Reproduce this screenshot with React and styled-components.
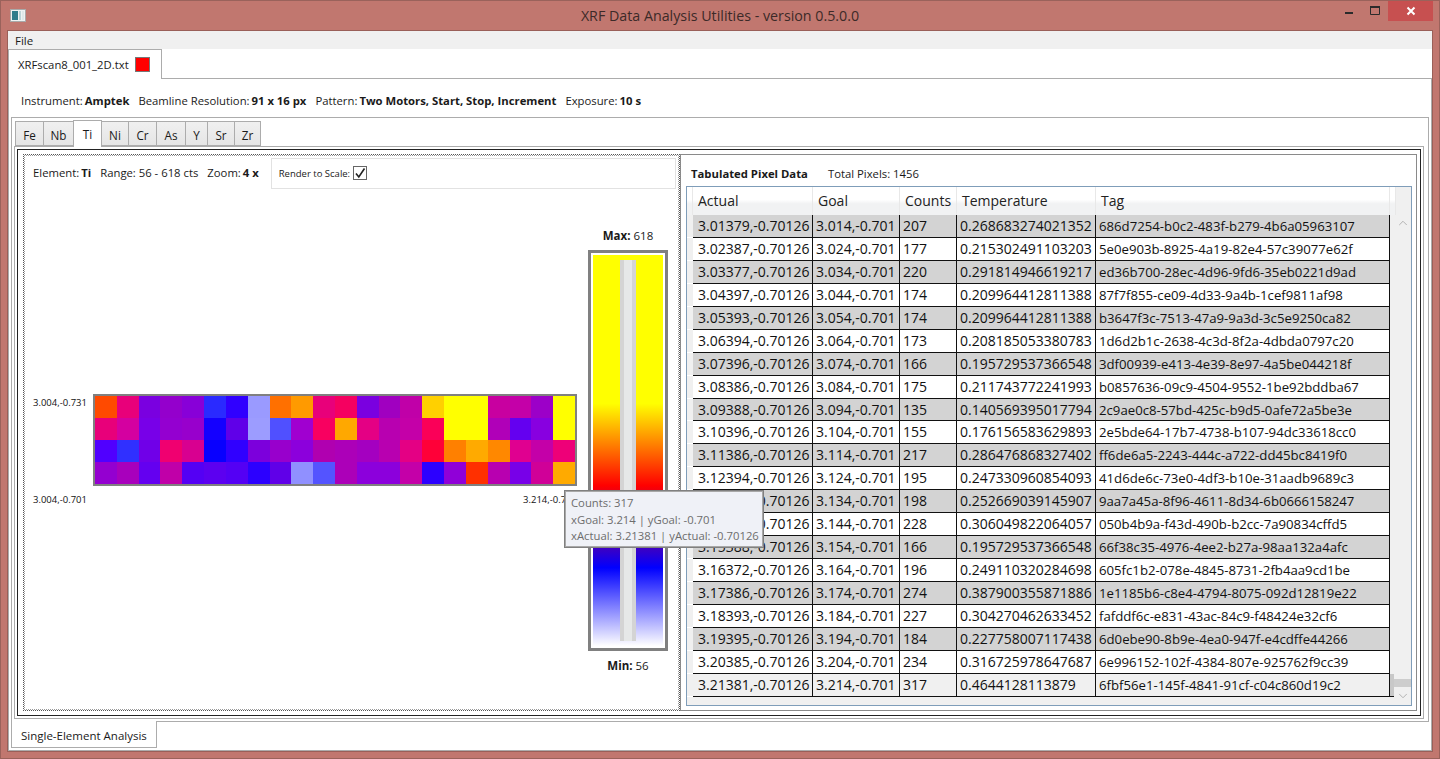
import React from 'react'
import styled, { createGlobalStyle } from 'styled-components'
import { ChevronUp, ChevronDown } from 'lucide-react'

const GlobalStyle = createGlobalStyle`
    html, body {
        margin: 0;
        padding: 0;
        overflow: hidden;
    }
    body {
        font-family: "Open Sans", "Noto Sans", sans-serif;
        font-size: 11.3px;
        color: #1a1a1a;
    }
    * {
        box-sizing: border-box;
    }
`

const Y = '#ffff00'

// heat map cells, read off the picture row by row
const heat = [
    ['#ff4a00', '#e8007a', '#7a00e0', '#9400cc', '#8800d8', '#2a2aff', '#3000ff', '#9a9aff', '#ff7000', '#ff9a00', '#e8007a', '#f50060', '#7a00e0', '#a000c0', '#c000a8', '#ffd000', Y, Y, '#c800a0', '#c400a8', '#9c00c8', Y],
    ['#e8007a', '#d400a0', '#7800e8', '#9400d0', '#9800cc', '#1400ff', '#6000e8', '#9c9cff', '#5050ff', '#a000d0', '#f80060', '#ffa800', '#e40084', '#b800b0', '#c400a8', '#fa0058', Y, Y, '#b000b8', '#6400f0', '#8800e0', Y],
    ['#5000ff', '#3030ff', '#7000e8', '#f00070', '#d80090', '#0800ff', '#3000ff', '#7c00dc', '#9800cc', '#8c00dc', '#b000b0', '#ac00b8', '#a400c0', '#b800b0', '#e40084', '#ff0038', '#ff8000', '#ffaa00', '#ff8800', '#e00090', '#c400a8', '#ee0078'],
    ['#9400d0', '#a800bc', '#6400f0', '#c000a8', '#5400f4', '#5c00f0', '#5400f4', '#2c00ff', '#6000e8', '#9090ff', '#5454ff', '#ac00b8', '#8c00dc', '#8c00dc', '#c400a8', '#2c00ff', '#9000d8', '#ff3000', '#b800b0', '#7800e8', '#d00098', '#ffaa00'],
]

const rows = [
    ['3.01379,-0.70126', '3.014,-0.701', '207', '0.268683274021352', '686d7254-b0c2-483f-b279-4b6a05963107'],
    ['3.02387,-0.70126', '3.024,-0.701', '177', '0.215302491103203', '5e0e903b-8925-4a19-82e4-57c39077e62f'],
    ['3.03377,-0.70126', '3.034,-0.701', '220', '0.291814946619217', 'ed36b700-28ec-4d96-9fd6-35eb0221d9ad'],
    ['3.04397,-0.70126', '3.044,-0.701', '174', '0.209964412811388', '87f7f855-ce09-4d33-9a4b-1cef9811af98'],
    ['3.05393,-0.70126', '3.054,-0.701', '174', '0.209964412811388', 'b3647f3c-7513-47a9-9a3d-3c5e9250ca82'],
    ['3.06394,-0.70126', '3.064,-0.701', '173', '0.208185053380783', '1d6d2b1c-2638-4c3d-8f2a-4dbda0797c20'],
    ['3.07396,-0.70126', '3.074,-0.701', '166', '0.195729537366548', '3df00939-e413-4e39-8e97-4a5be044218f'],
    ['3.08386,-0.70126', '3.084,-0.701', '175', '0.211743772241993', 'b0857636-09c9-4504-9552-1be92bddba67'],
    ['3.09388,-0.70126', '3.094,-0.701', '135', '0.140569395017794', '2c9ae0c8-57bd-425c-b9d5-0afe72a5be3e'],
    ['3.10396,-0.70126', '3.104,-0.701', '155', '0.176156583629893', '2e5bde64-17b7-4738-b107-94dc33618cc0'],
    ['3.11386,-0.70126', '3.114,-0.701', '217', '0.286476868327402', 'ff6de6a5-2243-444c-a722-dd45bc8419f0'],
    ['3.12394,-0.70126', '3.124,-0.701', '195', '0.247330960854093', '41d6de6c-73e0-4df3-b10e-31aadb9689c3'],
    ['3.13389,-0.70126', '3.134,-0.701', '198', '0.252669039145907', '9aa7a45a-8f96-4611-8d34-6b0666158247'],
    ['3.14391,-0.70126', '3.144,-0.701', '228', '0.306049822064057', '050b4b9a-f43d-490b-b2cc-7a90834cffd5'],
    ['3.15388,-0.70126', '3.154,-0.701', '166', '0.195729537366548', '66f38c35-4976-4ee2-b27a-98aa132a4afc'],
    ['3.16372,-0.70126', '3.164,-0.701', '196', '0.249110320284698', '605fc1b2-078e-4845-8731-2fb4aa9cd1be'],
    ['3.17386,-0.70126', '3.174,-0.701', '274', '0.387900355871886', '1e1185b6-c8e4-4794-8075-092d12819e22'],
    ['3.18393,-0.70126', '3.184,-0.701', '227', '0.304270462633452', 'fafddf6c-e831-43ac-84c9-f48424e32cf6'],
    ['3.19395,-0.70126', '3.194,-0.701', '184', '0.227758007117438', '6d0ebe90-8b9e-4ea0-947f-e4cdffe44266'],
    ['3.20385,-0.70126', '3.204,-0.701', '234', '0.316725978647687', '6e996152-102f-4384-807e-925762f9cc39'],
    ['3.21381,-0.70126', '3.214,-0.701', '317', '0.4644128113879', '6fbf56e1-145f-4841-91cf-c04c860d19c2'],
]

const elements = ['Fe', 'Nb', 'Ti', 'Ni', 'Cr', 'As', 'Y', 'Sr', 'Zr']
const columns = ['Actual', 'Goal', 'Counts', 'Temperature', 'Tag']
const COLS = '6px 120px 87px 57px 139px 294px 4px'

const Frame = styled.div`
    width: 1440px;
    height: 759px;
    display: flex;
    flex-direction: column;
    background: #c1776f;
    border: 1px solid #9a625b;
    padding: 0 7px 7px;
`
const TitleBar = styled.div`
    height: 30px;
    flex: none;
    display: grid;
    grid-template-columns: 1fr auto 1fr;
    margin: 0 -7px;
`
const AppIcon = styled.svg`
    width: 16px;
    height: 13px;
    margin: 8px 0 0 9px;
    display: block;
`
const Title = styled.div`
    font-size: 14.25px;
    line-height: 30px;
    color: #3c2a28;
`
const WindowButtons = styled.div`
    display: flex;
    justify-content: flex-end;
    align-items: flex-start;
    padding-right: 6px;
`
const CaptionButton = styled.div`
    width: ${p => p.$w}px;
    height: 20px;
    display: flex;
    align-items: center;
    justify-content: center;
    background: ${p => (p.$close ? '#c75050' : 'transparent')};
`
const Content = styled.div`
    flex: 1;
    min-height: 0;
    display: flex;
    flex-direction: column;
    background: #fff;
    outline: 1px solid #9a5f58;
`
const MenuBar = styled.div`
    height: 18px;
    flex: none;
    background: #f0f0f0;
    padding-left: 7px;
    font-size: 11.5px;
    line-height: 19px;
`
const FileTabs = styled.div`
    height: 29px;
    flex: none;
    display: flex;
    position: relative;
    z-index: 1;
`
const FileTab = styled.div`
    width: 154px;
    height: 30px;
    background: #fff;
    border: 1px solid #acacac;
    border-bottom: none;
    display: flex;
    align-items: center;
    padding-left: 9px;
    gap: 6px;
`
const Swatch = styled.span`
    width: 15px;
    height: 15px;
    background: #ff0000;
    border: 1px solid #777;
`
const FilePanel = styled.div`
    flex: 1;
    min-height: 0;
    display: flex;
    flex-direction: column;
    border: 1px solid #acacac;
    padding: 0 2px 1px 2px;
`
const InfoRow = styled.div`
    height: 38px;
    flex: none;
    display: flex;
    align-items: center;
    gap: 9px;
    padding: 4px 0 0 10px;
`
const Pair = styled.span`
    white-space: nowrap;
`
const Strong = styled.b`
    font-weight: 700;
    margin-left: 2px;
`
const AnalysisPanel = styled.div`
    height: 605px;
    flex: none;
    border: 1px solid #acacac;
    padding: 0 4px 2px 2px;
    display: flex;
    flex-direction: column;
`
const ElementTabs = styled.div`
    height: 28px;
    flex: none;
    display: flex;
    align-items: flex-end;
    padding-left: 2px;
    position: relative;
    z-index: 1;
`
const ElementTab = styled.div`
    width: ${p => p.$w}px;
    height: ${p => (p.$active ? 27 : 25)}px;
    margin-bottom: ${p => (p.$active ? -1 : 0)}px;
    border: 1px solid #acacac;
    border-bottom: ${p => (p.$active ? 'none' : '1px solid #acacac')};
    margin-left: -1px;
    background: ${p => (p.$active ? '#fff' : 'linear-gradient(#f0f0f0, #e5e5e5)')};
    display: flex;
    align-items: center;
    justify-content: center;
    padding-top: ${p => (p.$active ? 0 : 2)}px;
    font-size: 11.7px;
    position: relative;
    z-index: ${p => (p.$active ? 1 : 0)};
`
const ElementPanel = styled.div`
    flex: 1;
    min-height: 0;
    border: 1px solid #acacac;
    padding: 2px;
`
const OuterBox = styled.div`
    height: 100%;
    border: 1px solid #222;
    padding: 4px 3px 4px 5px;
    display: flex;
`
const LeftPane = styled.div`
    width: 657px;
    flex: none;
    border: 1px dotted #555;
    outline: 1px dotted #999;
    outline-offset: -2px;
    display: flex;
    flex-direction: column;
`
const PaneHeader = styled.div`
    height: 33px;
    flex: none;
    display: flex;
    align-items: center;
    padding: 2px 3px 0 9px;
    gap: 9px;
`
const RenderBox = styled.div`
    flex: 1;
    height: 31px;
    margin-left: 3px;
    margin-top: 1px;
    border: 1px solid #e2e2e2;
    display: flex;
    align-items: center;
    padding-left: 7px;
    gap: 3px;
    font-size: 9.5px;
`
const CheckBox = styled.span`
    width: 14px;
    height: 14px;
    border: 1px solid #666;
    display: flex;
    align-items: center;
    justify-content: center;
`
const PlotArea = styled.div`
    flex: 1;
    min-height: 0;
    display: flex;
    position: relative;
`
const PlotColumn = styled.div`
    width: 553px;
    flex: none;
    display: flex;
    flex-direction: column;
    justify-content: center;
    padding: 0 0 0 9px;
`
const HeatRow = styled.div`
    display: flex;
`
const AxisLabel = styled.span`
    font-size: 9.5px;
    white-space: nowrap;
    color: #111;
`
const CornerLabel = styled(AxisLabel)`
    width: 60px;
    flex: none;
    padding-top: 3px;
`
const HeatMap = styled.div`
    width: 484px;
    height: 92px;
    flex: none;
    margin-top: 1px;
    border: 2px solid #808080;
    display: grid;
    grid-template-columns: repeat(22, 1fr);
    grid-template-rows: repeat(4, 1fr);
`
const HeatCell = styled.div`
    background: ${p => p.$c};
`
const AxisRow = styled.div`
    display: flex;
    justify-content: space-between;
    width: 544px;
    margin-top: 7px;
`
const ScaleColumn = styled.div`
    width: 80px;
    flex: none;
    margin-left: 11px;
    display: flex;
    flex-direction: column;
    align-items: center;
    justify-content: center;
    padding-top: 3px;
`
const ScaleCaption = styled.div`
    height: 18px;
    line-height: 18px;
    white-space: nowrap;
    font-size: 11.5px;
    margin: ${p => (p.$bottom ? '6px 0 0' : '0 0 5px')};
`
const ScaleBar = styled.div`
    width: 80px;
    height: 401px;
    flex: none;
    border: 3px solid #808080;
    padding: 2px;
    background: #fff;
`
const ScaleFill = styled.div`
    height: 100%;
    display: flex;
    justify-content: center;
    padding: 5px 0;
    background: linear-gradient(#ffff00 0%, #ffff00 38%, #ff0000 59%, #0000ff 80%, #ffffff 100%);
`
const SliderTrack = styled.div`
    width: 16px;
    background: #e6e8e8;
    border-left: 4px solid #d4d4d4;
    border-right: 4px solid #d4d4d4;
`
const Tip = styled.div`
    position: absolute;
    left: 540px;
    top: 302px;
    width: 200px;
    height: 58px;
    z-index: 5;
    background: #eff1f7;
    border: 1px solid #808080;
    box-shadow: 0 0 0 1px #a8a8a8 inset;
    padding: 4px 6px;
    line-height: 16.5px;
    color: #6d6d6d;
    white-space: nowrap;
`
const RightPane = styled.div`
    flex: 1;
    min-width: 0;
    border: 1px solid #8a8a8a;
    display: flex;
    flex-direction: column;
    padding: 0 4px 4px 5px;
`
const TableHeading = styled.div`
    height: 31px;
    flex: none;
    display: flex;
    align-items: center;
    gap: 20px;
    padding: 6px 0 0 5px;
`
const DataGrid = styled.div`
    flex: 1;
    min-height: 0;
    border: 1px solid #7f9db9;
    display: flex;
    background: #f0f0f0;
`
const GridBody = styled.div`
    width: 707px;
    flex: none;
    display: flex;
    flex-direction: column;
`
const GridRow = styled.div`
    display: grid;
    grid-template-columns: ${COLS};
    height: ${p => (p.$head ? '28px' : '22.95px')};
    flex: none;
    font-size: 14px;
`
const HeadCell = styled.div`
    background: linear-gradient(#ffffff 0%, #ffffff 45%, #f1f2f3 60%, #f1f2f3 100%);
    border-right: 1px solid #e8e8e8;
    padding: 0 0 0 5px;
    line-height: 28px;
    color: #222;
    white-space: nowrap;
`
const RowHeader = styled.div`
    background: #f0f0f0;
    border-bottom: 1px solid #fff;
`
const Cell = styled.div`
    background: ${p => p.$bg};
    border-right: 1px solid #111;
    border-bottom: 1px solid #111;
    padding-left: ${p => (p.$first ? 5 : 3)}px;
    line-height: 22px;
    font-size: ${p => (p.$tag ? 13.2 : 14)}px;
    white-space: nowrap;
    overflow: hidden;
    color: #111;
`
const RowEnd = styled.div`
    background: ${p => (p.$last ? '#c8c8c8' : 'transparent')};
    border-bottom: ${p => (p.$last ? '1px solid #111' : 'none')};
`
const ScrollBar = styled.div`
    flex: 1;
    display: flex;
    flex-direction: column;
    align-items: center;
    color: #a9a9a9;
    padding-top: 29px;
`
const ScrollThumb = styled.div`
    align-self: stretch;
    height: 8px;
    margin-top: auto;
    background: #cdcdcd;
`
const ScrollDown = styled.div`
    height: 18px;
    display: flex;
    align-items: center;
`
const BottomTab = styled.div`
    width: 146px;
    height: 27px;
    flex: none;
    background: #fff;
    margin-top: -1px;
    border: 1px solid #acacac;
    border-top: none;
    padding: 7px 0 0 9px;
    font-size: 11.5px;
    position: relative;
    z-index: 1;
`

const Stat = ({ label, value }) => (
    <Pair>
        {label}:<Strong>{value}</Strong>
    </Pair>
)

function App() {
    const tabWidths = { Fe: 29, Nb: 31, Ti: 29, Ni: 28, Cr: 29, As: 30, Y: 23, Sr: 28, Zr: 27 }
    return (
        <Frame>
            <GlobalStyle />
            <TitleBar>
                <AppIcon viewBox="0 0 16 13">
                    <rect x="0.5" y="0.5" width="15" height="12" fill="#eef2f2" stroke="#a9a9a9" />
                    <rect x="2" y="2" width="6" height="9" fill="#2f7d8c" />
                    <rect x="9" y="2" width="2" height="9" fill="#bcd3d6" />
                    <rect x="12" y="2" width="2" height="9" fill="#dfe8e8" />
                </AppIcon>
                <Title>XRF Data Analysis Utilities - version 0.5.0.0</Title>
                <WindowButtons>
                    <CaptionButton $w={26}>
                        <svg width="10" height="10" viewBox="0 0 10 10"><rect x="1" y="6" width="8" height="2" fill="#2b2b2b" /></svg>
                    </CaptionButton>
                    <CaptionButton $w={26}>
                        <svg width="12" height="10" viewBox="0 0 12 10"><path d="M1.5 1.5h9v7h-9zM1 1.5h10" fill="none" stroke="#2b2b2b" /><rect x="1" y="0" width="10" height="2" fill="#2b2b2b" /></svg>
                    </CaptionButton>
                    <CaptionButton $w={45} $close>
                        <svg width="10" height="10" viewBox="0 0 10 10"><path d="M1.5 1.5l7 7M8.5 1.5l-7 7" stroke="#fff" strokeWidth="2" /></svg>
                    </CaptionButton>
                </WindowButtons>
            </TitleBar>
            <Content>
                <MenuBar>File</MenuBar>
                <FileTabs>
                    <FileTab>XRFscan8_001_2D.txt<Swatch /></FileTab>
                </FileTabs>
                <FilePanel>
                    <InfoRow>
                        <Stat label="Instrument" value="Amptek" />
                        <Stat label="Beamline Resolution" value="91 x 16 px" />
                        <Stat label="Pattern" value="Two Motors, Start, Stop, Increment" />
                        <Stat label="Exposure" value="10 s" />
                    </InfoRow>
                    <AnalysisPanel>
                        <ElementTabs>
                            {elements.map(el => (
                                <ElementTab key={el} $w={tabWidths[el]} $active={el === 'Ti'}>{el}</ElementTab>
                            ))}
                        </ElementTabs>
                        <ElementPanel>
                            <OuterBox>
                                <LeftPane>
                                    <PaneHeader>
                                        <Stat label="Element" value="Ti" />
                                        <Pair>Range: 56 - 618 cts</Pair>
                                        <Stat label="Zoom" value="4 x" />
                                        <RenderBox>
                                            Render to Scale:
                                            <CheckBox>
                                                <svg width="12" height="12" viewBox="0 0 12 12"><path d="M2 6.5l2.8 3.5L10.5 1.5" fill="none" stroke="#222" strokeWidth="1.6" /></svg>
                                            </CheckBox>
                                        </RenderBox>
                                    </PaneHeader>
                                    <PlotArea>
                                        <PlotColumn>
                                            <HeatRow>
                                                <CornerLabel>3.004,-0.731</CornerLabel>
                                                <HeatMap>
                                                    {heat.flat().map((c, i) => <HeatCell key={i} $c={c} />)}
                                                </HeatMap>
                                            </HeatRow>
                                            <AxisRow>
                                                <AxisLabel>3.004,-0.701</AxisLabel>
                                                <AxisLabel>3.214,-0.701</AxisLabel>
                                            </AxisRow>
                                        </PlotColumn>
                                        <ScaleColumn>
                                            <ScaleCaption><b>Max:</b> 618</ScaleCaption>
                                            <ScaleBar>
                                                <ScaleFill><SliderTrack /></ScaleFill>
                                            </ScaleBar>
                                            <ScaleCaption $bottom><b>Min:</b> 56</ScaleCaption>
                                        </ScaleColumn>
                                        <Tip>
                                            Counts: 317<br />
                                            xGoal: 3.214 | yGoal: -0.701<br />
                                            xActual: 3.21381 | yActual: -0.70126
                                        </Tip>
                                    </PlotArea>
                                </LeftPane>
                                <RightPane>
                                    <TableHeading>
                                        <b>Tabulated Pixel Data</b>
                                        <Pair>Total Pixels: 1456</Pair>
                                    </TableHeading>
                                    <DataGrid>
                                        <GridBody>
                                            <GridRow $head>
                                                <HeadCell />
                                                {columns.map(c => <HeadCell key={c}>{c}</HeadCell>)}
                                                <HeadCell />
                                            </GridRow>
                                            {rows.map((row, i) => {
                                                const last = i === rows.length - 1
                                                const bg = last ? '#f0f0f0' : i % 2 === 0 ? '#d3d3d3' : '#fff'
                                                return (
                                                    <GridRow key={row[4]}>
                                                        <RowHeader />
                                                        {row.map((text, j) => (
                                                            <Cell key={j} $bg={bg} $first={j === 0} $tag={j === 4}>{text}</Cell>
                                                        ))}
                                                        <RowEnd $last={last} />
                                                    </GridRow>
                                                )
                                            })}
                                        </GridBody>
                                        <ScrollBar>
                                            <ChevronUp size={14} strokeWidth={1.5} />
                                            <ScrollThumb />
                                            <ScrollDown><ChevronDown size={14} strokeWidth={1.5} /></ScrollDown>
                                        </ScrollBar>
                                    </DataGrid>
                                </RightPane>
                            </OuterBox>
                        </ElementPanel>
                    </AnalysisPanel>
                    <BottomTab>Single-Element Analysis</BottomTab>
                </FilePanel>
            </Content>
        </Frame>
    )
}

export default App
